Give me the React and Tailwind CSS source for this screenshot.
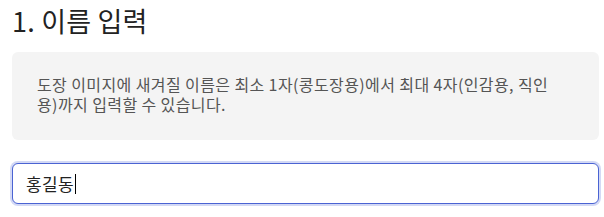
export default function App() {
  return (
    <div
      className="w-[604px] h-[217px] bg-white pl-3 pr-[5px] pt-[2px]"
      style={{ fontFamily: '"Noto Sans CJK KR", "Noto Sans", sans-serif' }}
    >
      <h1 className="text-[27px] leading-[38px] font-normal text-[#222] tracking-[0.2px]">
        1. 이름 입력
      </h1>
      <div className="mt-3 rounded-md bg-[#f4f4f4] pl-[25px] pt-[22px] pb-[26px]">
        <p className="w-[518px] text-[16px] leading-[20px] tracking-[0.4px] text-[#555]">
          도장 이미지에 새겨질 이름은 최소 1자(콩도장용)에서 최대 4자(인감용, 직인용)까지 입력할 수 있습니다.
        </p>
      </div>
      <div className="mt-[23px] h-[41px] rounded-md border border-[#4a63d3] ring-2 ring-[#d3d9f5] bg-white flex items-center pl-[13px]">
        <span className="text-[17px] leading-[20px] tracking-[0.3px] text-[#222]">홍길동</span>
        <span className="ml-[1px] w-[1px] h-[20px] bg-black" />
      </div>
    </div>
  );
}
